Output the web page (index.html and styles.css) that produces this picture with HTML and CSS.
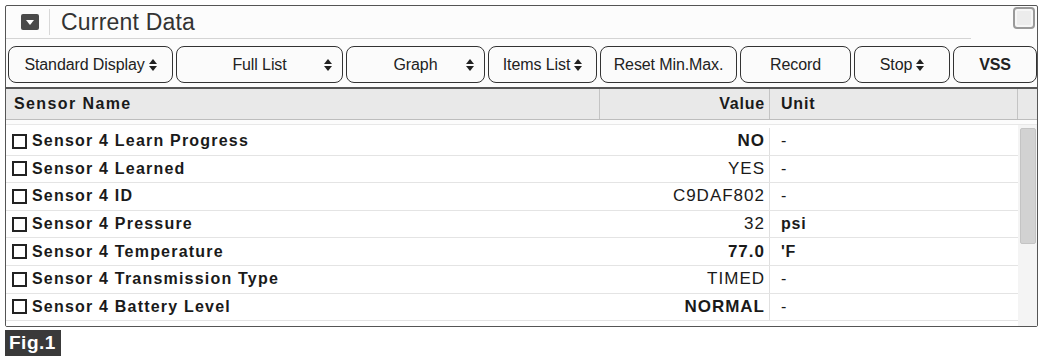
FILE: index.html
```html
<!DOCTYPE html>
<html lang="en">

<head>
    <meta charset="UTF-8" />
    <title>Current Data</title>
    <link rel="stylesheet" href="styles.css">
</head>

<body>
    <div class="panel">
        <!-- Title bar -->
        <div class="titlebar">
            <div class="collapse">
                <svg width="18" height="16" viewBox="0 0 18 16">
                    <rect x="0" y="0" width="18" height="16" rx="2" fill="#4a4a4a" />
                    <path d="M5 6 L13 6 L9 11 Z" fill="#fff" />
                </svg>
            </div>
            <div class="title">Current Data</div>
            <div class="maximize"></div>
        </div>

        <!-- Toolbar -->
        <div class="toolbar">
            <button class="btn w1">Standard Display <span class="arr"></span></button>
            <button class="btn w2 spread"><span class="lbl">Full List</span><span class="arr"></span></button>
            <button class="btn w3 spread"><span class="lbl">Graph</span><span class="arr"></span></button>
            <button class="btn w4">Items List <span class="arr"></span></button>
            <button class="btn w5">Reset Min.Max.</button>
            <button class="btn w6">Record</button>
            <button class="btn w7">Stop <span class="arr"></span></button>
            <button class="btn w8 bold">VSS</button>
        </div>

        <!-- Grid -->
        <div class="grid">
            <div class="row head">
                <div class="c-name">Sensor Name</div>
                <div class="c-val">Value</div>
                <div class="c-unit">Unit</div>
                <div class="c-sb"></div>
            </div>
            <div class="body">
                <div class="rows">
                    <div class="row">
                        <div class="c-name"><span class="chk"></span>Sensor 4 Learn Progress</div>
                        <div class="c-val b">NO</div>
                        <div class="c-unit">-</div>
                    </div>
                    <div class="row">
                        <div class="c-name"><span class="chk"></span>Sensor 4 Learned</div>
                        <div class="c-val">YES</div>
                        <div class="c-unit">-</div>
                    </div>
                    <div class="row">
                        <div class="c-name"><span class="chk"></span>Sensor 4 ID</div>
                        <div class="c-val">C9DAF802</div>
                        <div class="c-unit">-</div>
                    </div>
                    <div class="row">
                        <div class="c-name"><span class="chk"></span>Sensor 4 Pressure</div>
                        <div class="c-val">32</div>
                        <div class="c-unit b">psi</div>
                    </div>
                    <div class="row">
                        <div class="c-name"><span class="chk"></span>Sensor 4 Temperature</div>
                        <div class="c-val b">77.0</div>
                        <div class="c-unit b">'F</div>
                    </div>
                    <div class="row">
                        <div class="c-name"><span class="chk"></span>Sensor 4 Transmission Type</div>
                        <div class="c-val">TIMED</div>
                        <div class="c-unit">-</div>
                    </div>
                    <div class="row">
                        <div class="c-name"><span class="chk"></span>Sensor 4 Battery Level</div>
                        <div class="c-val b">NORMAL</div>
                        <div class="c-unit">-</div>
                    </div>
                </div>
                <div class="scrollbar">
                    <div class="thumb"></div>
                </div>
            </div>
        </div>
    </div>

    <div class="fig">Fig.1</div>
</body>

</html>
```

FILE: styles.css
```css
* {
    margin: 0;
    padding: 0;
    box-sizing: border-box;
}

body {
    font-family: "Liberation Sans", Arial, sans-serif;
    background: #fff;
    color: #1a1a1a;
    padding: 5px 0 0 5px;
}

.panel {
    width: 1033px;
    height: 322px;
    border: 1px solid #555;
    border-radius: 2px;
    background: #fcfcfc;
    overflow: hidden;
}

/* Title bar */
.titlebar {
    display: flex;
    align-items: center;
    height: 33px;
    margin-right: 66px;
    border-bottom: 1px solid #d4d4d4;
    position: relative;
}

.collapse {
    width: 44px;
    height: 26px;
    display: flex;
    align-items: center;
    justify-content: center;
    padding-left: 4px;
    border-right: 1px solid #d8d8d8;
}

.collapse svg {
    display: block;
}

.title {
    font-size: 23px;
    color: #333;
    padding-left: 11px;
    letter-spacing: 0.2px;
}

.maximize {
    position: absolute;
    right: -64px;
    top: 1px;
    width: 22px;
    height: 22px;
    border: 2px solid #9a9a9a;
    border-radius: 4px;
    background: #ececec;
    box-shadow: inset 0 0 0 2px #f6f6f6;
}

/* Toolbar */
.toolbar {
    display: flex;
    gap: 3px;
    padding: 7px 0 0 2px;
    height: 48px;
}

.btn {
    height: 37px;
    border: 1.5px solid #333;
    border-radius: 8px;
    background: #fbfbfb;
    font-family: "Liberation Sans", Arial, sans-serif;
    font-size: 16px;
    letter-spacing: -0.1px;
    color: #222;
    display: flex;
    align-items: center;
    justify-content: center;
    gap: 4px;
    padding: 0 4px;
}

.btn.spread {
    justify-content: flex-end;
    gap: 0;
    padding-right: 10px;
}

.btn.spread .lbl {
    flex: 1;
    text-align: center;
    padding-left: 14px;
}

.btn.bold {
    font-weight: bold;
}

.w1 { width: 165px; }
.w2 { width: 167px; }
.w3 { width: 139px; }
.w4 { width: 109px; }
.w5 { width: 137px; }
.w6 { width: 111px; }
.w7 { width: 96px; }
.w8 { width: 84px; }

.arr {
    display: inline-block;
    width: 8px;
    height: 12px;
    position: relative;
    flex: none;
}

.arr::before,
.arr::after {
    content: "";
    position: absolute;
    left: 0;
    border-left: 4px solid transparent;
    border-right: 4px solid transparent;
}

.arr::before {
    top: 0;
    border-bottom: 5px solid #222;
}

.arr::after {
    bottom: 0;
    border-top: 5px solid #222;
}

/* Grid */
.grid {
    border-top: 2px solid #555;
}

.row {
    display: grid;
    grid-template-columns: 594px 170px 1fr;
    height: 27.6px;
    align-items: center;
    border-bottom: 1px solid #e4e4e4;
}

.row > div {
    height: 100%;
    display: flex;
    align-items: center;
}

.row.head {
    grid-template-columns: 594px 170px 1fr 19px;
    height: 31px;
    background: #e9e9e9;
    border-bottom: 1px solid #bdbdbd;
    font-weight: bold;
}

.row.head > div {
    border-right: 1px solid #c4c4c4;
}

.row.head .c-sb {
    border-right: none;
}

.c-name {
    padding-left: 6px;
    font-weight: bold;
    font-size: 16px;
    letter-spacing: 1.2px;
}

.head .c-name {
    padding-left: 8px;
    letter-spacing: 1.4px;
}

.c-val {
    justify-content: flex-end;
    padding-right: 4px;
    font-size: 17px;
    letter-spacing: 1px;
    border-right: 1px solid #e0e0e0;
}

.head .c-val {
    font-size: 16px;
    letter-spacing: 0.8px;
}

.c-unit {
    padding-left: 11px;
    font-size: 16px;
    letter-spacing: 0.8px;
}

.b {
    font-weight: bold;
}

.chk {
    width: 15px;
    height: 15px;
    border: 2px solid #222;
    margin-right: 5px;
    background: #fff;
    flex: none;
}

.body {
    display: flex;
    border-top: 1px solid #e8e8e8;
    margin-top: 4px;
    background: #fff;
    height: 202px;
}

.rows {
    flex: 1;
    padding-top: 3px;
}

.body .row {
    grid-template-columns: 594px 170px 1fr;
}

.scrollbar {
    width: 19px;
    background: #f4f4f4;
    padding: 3px 1px 0 2px;
}

.thumb {
    height: 116px;
    background: #d2d2d2;
    border: 1px solid #c4c4c4;
    border-radius: 2px;
}

/* Caption */
.fig {
    display: inline-block;
    margin-top: 3px;
    background: #3a3a3a;
    color: #fff;
    font-weight: bold;
    font-size: 19px;
    letter-spacing: 0.5px;
    padding: 2px 5px 2px 4px;
}
```
